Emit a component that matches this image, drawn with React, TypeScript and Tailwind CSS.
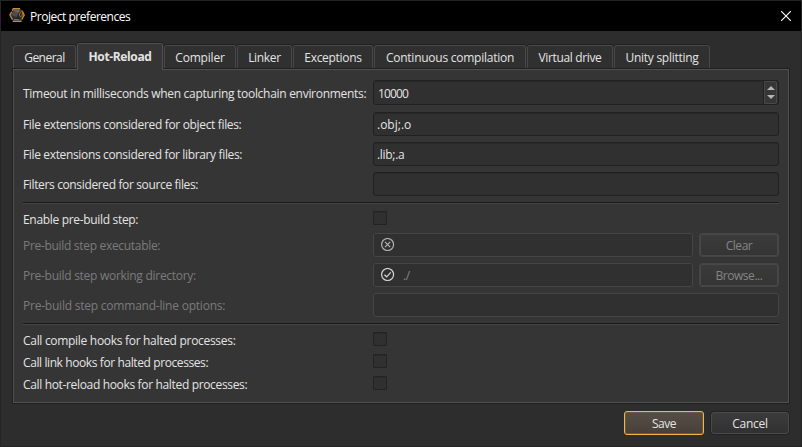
import React from "react";

const inset = "h-6 rounded-[3px] border bg-[#303030]";
const live = "border-[#212121] shadow-[inset_0_1px_0_#292929]";
const off = "border-[#454545]";

function Tab({ w, label, track, active }: { w: string; label: string; track: string; active?: boolean }) {
  return (
    <div
      className={
        active
          ? `relative z-10 -mb-px flex h-[27px] shrink-0 justify-center rounded-t-[3px] border border-b-0 border-[#505050] bg-[#353535] pt-1 font-bold shadow-[0_-1px_0_#202020] ${w}`
          : `flex h-6 shrink-0 justify-center rounded-t-[3px] border border-b-0 border-[#484848] bg-[#303030] pt-[3px] shadow-[0_-1px_0_#212121] ${w}`
      }
    >
      <span className={`leading-[18px] ${track}`}>{label}</span>
    </div>
  );
}

function Row({ h, label, track, dim, children }: { h: string; label: string; track: string; dim?: boolean; children?: React.ReactNode }) {
  return (
    <div className={`flex items-center ${h}`}>
      <div className={`w-[350px] shrink-0 ${h === "h-3.5" ? "pt-1" : "pt-0.5"} ${dim ? "text-[#7b7b7b]" : ""}`}>
        <span className={track}>{label}</span>
      </div>
      {children}
    </div>
  );
}

function Check() {
  return <div className="h-3.5 w-3.5 rounded-[1px] border border-[#232323] bg-[#303030] shadow-[inset_0_1px_0_#2a2a2a]" />;
}

function Divider() {
  return <div className="h-0.5 border-t border-[#191919] bg-[#464646]" />;
}

function StatusIcon({ ok }: { ok?: boolean }) {
  return (
    <svg width="14" height="14" viewBox="0 0 14 14" fill="none" stroke={ok ? "#d8d8d8" : "#b4b4b4"} strokeWidth="1.2">
      <circle cx="6.6" cy="6.5" r="6" />
      {ok ? <path d="M3.4 6.8 5.6 8.8 9.8 4.4" /> : <path d="m4 3.9 5.2 5.2M9.2 3.9 4 9.1" />}
    </svg>
  );
}

function SideButton({ label }: { label: string }) {
  return (
    <button className="ml-1.5 flex h-6 w-20 items-center justify-center rounded-[3px] border border-[#454545] bg-linear-to-b from-[#3b3b3b] to-[#343434] pt-0.5 text-[#858585] shadow-[inset_0_0_0_1px_#484848]">
      <span className="tracking-[-0.45px]">{label}</span>
    </button>
  );
}

export default function App() {
  return (
    <div className="flex h-[447px] w-[802px] flex-col overflow-hidden border border-[#242424] bg-[#2d2d2d] font-['Open_Sans','Noto_Sans',sans-serif] text-[12px] leading-4 whitespace-nowrap text-[#e4e4e4]">
      <header className="flex h-[30px] shrink-0 items-center bg-black pl-2 text-white">
        <svg width="16" height="16" viewBox="0 0 16 16">
          <path d="M4.3.7h7.6L15.2 7l-3.3 6.3H4.3L.9 7z" fill="#303033" />
          <path d="M4.5 1.5h7L9.5 5 5 5z" fill="#66676b" />
          <path d="M2 7l3-4.5L9.5 5 8 9z" fill="#4c4d52" />
          <path d="M8 9 10 4.5 13.5 6l-2.5 6H5z" fill="#242528" />
          <path d="M11 .7H4.3L.9 7l3.4 6.3h7.6L15.2 7l-2-4" fill="none" stroke="#d58a25" strokeWidth="1.3" strokeDasharray="9 1.2" />
          <path d="M13.6 2.8c-2 .4-3.2 2.4-3.1 4.4.1 1.4 1 2 1.8 1.2 1.1-1 1.7-3.4 1.3-5.6M5 11.6l5.5.2" fill="none" stroke="#b9701c" />
        </svg>
        <span className="ml-[5px] pt-px tracking-[-0.47px]">Project preferences</span>
        <svg className="mr-2.5 ml-auto" width="10" height="10" viewBox="0 0 10 10" stroke="#fff" strokeWidth="1.1">
          <path d="m0 0 10 10M10 0 0 10" />
        </svg>
      </header>

      <div className="mt-3 ml-3 flex h-[26px] shrink-0 items-end gap-[1px]">
        <Tab w="w-[63px]" label="General" track="tracking-[-0.5px]" />
        <Tab w="w-[86px]" label="Hot-Reload" track="tracking-[-0.36px]" active />
        <Tab w="w-[72px]" label="Compiler" track="tracking-[-0.2px]" />
        <Tab w="w-[55px]" label="Linker" track="tracking-[-0.33px]" />
        <Tab w="w-20" label="Exceptions" track="tracking-[-0.3px]" />
        <Tab w="w-[152px]" label="Continuous compilation" track="tracking-[-0.25px]" />
        <Tab w="w-[86px]" label="Virtual drive" track="tracking-[-0.35px]" />
        <Tab w="w-24" label="Unity splitting" track="tracking-[-0.28px]" />
      </div>

      <main className="ml-3 h-[334px] w-[776px] shrink-0 border border-[#505050] bg-[#353535] px-[9px] pt-[10px] shadow-[0_0_0_1px_#202020]">
        <Row h="h-[25px]" label="Timeout in milliseconds when capturing toolchain environments:" track="tracking-[-0.29px]">
          <div className={`${inset} ${live} flex h-[25px]! w-[406px] items-center pl-1`}>
            <span className="pt-0.5 tracking-[-0.85px]">10000</span>
            <div className="mr-px ml-auto flex h-[23px] w-[13px] flex-col items-center justify-center gap-[5px] rounded-r-[2px] border border-[#484848] bg-[#363636] shadow-[-1px_0_0_#212121]">
              <svg width="8" height="4" viewBox="0 0 8 4"><path d="M0 4 4 0l4 4z" fill="#b4b4b4" /></svg>
              <svg width="8" height="4" viewBox="0 0 8 4"><path d="M0 0h8L4 4z" fill="#b4b4b4" /></svg>
            </div>
          </div>
        </Row>
        <div className="mt-[7px] flex flex-col gap-1.5">
          <Row h="h-6" label="File extensions considered for object files:" track="tracking-[-0.34px]">
            <div className={`${inset} ${live} flex w-[406px] items-center pt-0.5 pl-[3px]`}>.obj;.o</div>
          </Row>
          <Row h="h-6" label="File extensions considered for library files:" track="tracking-[-0.35px]">
            <div className={`${inset} ${live} flex w-[406px] items-center pt-0.5 pl-[3px] tracking-[-0.3px]`}>.lib;.a</div>
          </Row>
          <Row h="h-6" label="Filters considered for source files:" track="tracking-[-0.36px]">
            <div className={`${inset} ${live} w-[406px]`} />
          </Row>
        </div>
        <div className="mt-1.5"><Divider /></div>
        <div className="mt-[7px]">
          <Row h="h-3.5" label="Enable pre-build step:" track="tracking-[-0.32px]"><Check /></Row>
        </div>
        <div className="mt-2 flex flex-col gap-1.5">
          <Row h="h-6" label="Pre-build step executable:" track="tracking-[-0.31px]" dim>
            <div className={`${inset} ${off} flex w-80 items-center pl-[7px]`}><StatusIcon /></div>
            <SideButton label="Clear" />
          </Row>
          <Row h="h-6" label="Pre-build step working directory:" track="tracking-[-0.28px]" dim>
            <div className={`${inset} ${off} flex w-80 items-center gap-2 pl-[7px] text-[#858585]`}>
              <StatusIcon ok />
              <span className="pt-0.5 tracking-[-0.3px]">./</span>
            </div>
            <SideButton label="Browse..." />
          </Row>
          <Row h="h-6" label="Pre-build step command-line options:" track="tracking-[-0.22px]" dim>
            <div className={`${inset} ${off} w-[406px]`} />
          </Row>
        </div>
        <div className="mt-1.5"><Divider /></div>
        <div className="mt-[7px] flex flex-col gap-2">
          <Row h="h-3.5" label="Call compile hooks for halted processes:" track="tracking-[-0.3px]"><Check /></Row>
          <Row h="h-3.5" label="Call link hooks for halted processes:" track="tracking-[-0.4px]"><Check /></Row>
          <Row h="h-3.5" label="Call hot-reload hooks for halted processes:" track="tracking-[-0.34px]"><Check /></Row>
        </div>
      </main>

      <footer className="mt-2 mr-3 flex items-center justify-end gap-[7px]">
        <button className="flex h-6 w-20 items-center justify-center rounded-[3px] border border-[#ffb23e] bg-linear-to-b from-[#554e47] to-[#484038] pt-0.5 shadow-[inset_0_0_0_1px_#61594f]">
          <span className="tracking-[-0.5px]">Save</span>
        </button>
        <button className="flex h-[22px] w-[78px] items-center justify-center rounded-[3px] border border-[#4b4b4b] bg-linear-to-b from-[#3b3b3b] to-[#313131] pt-0.5 shadow-[0_0_0_1px_#232323]">
          <span className="tracking-[-0.3px]">Cancel</span>
        </button>
      </footer>
    </div>
  );
}
